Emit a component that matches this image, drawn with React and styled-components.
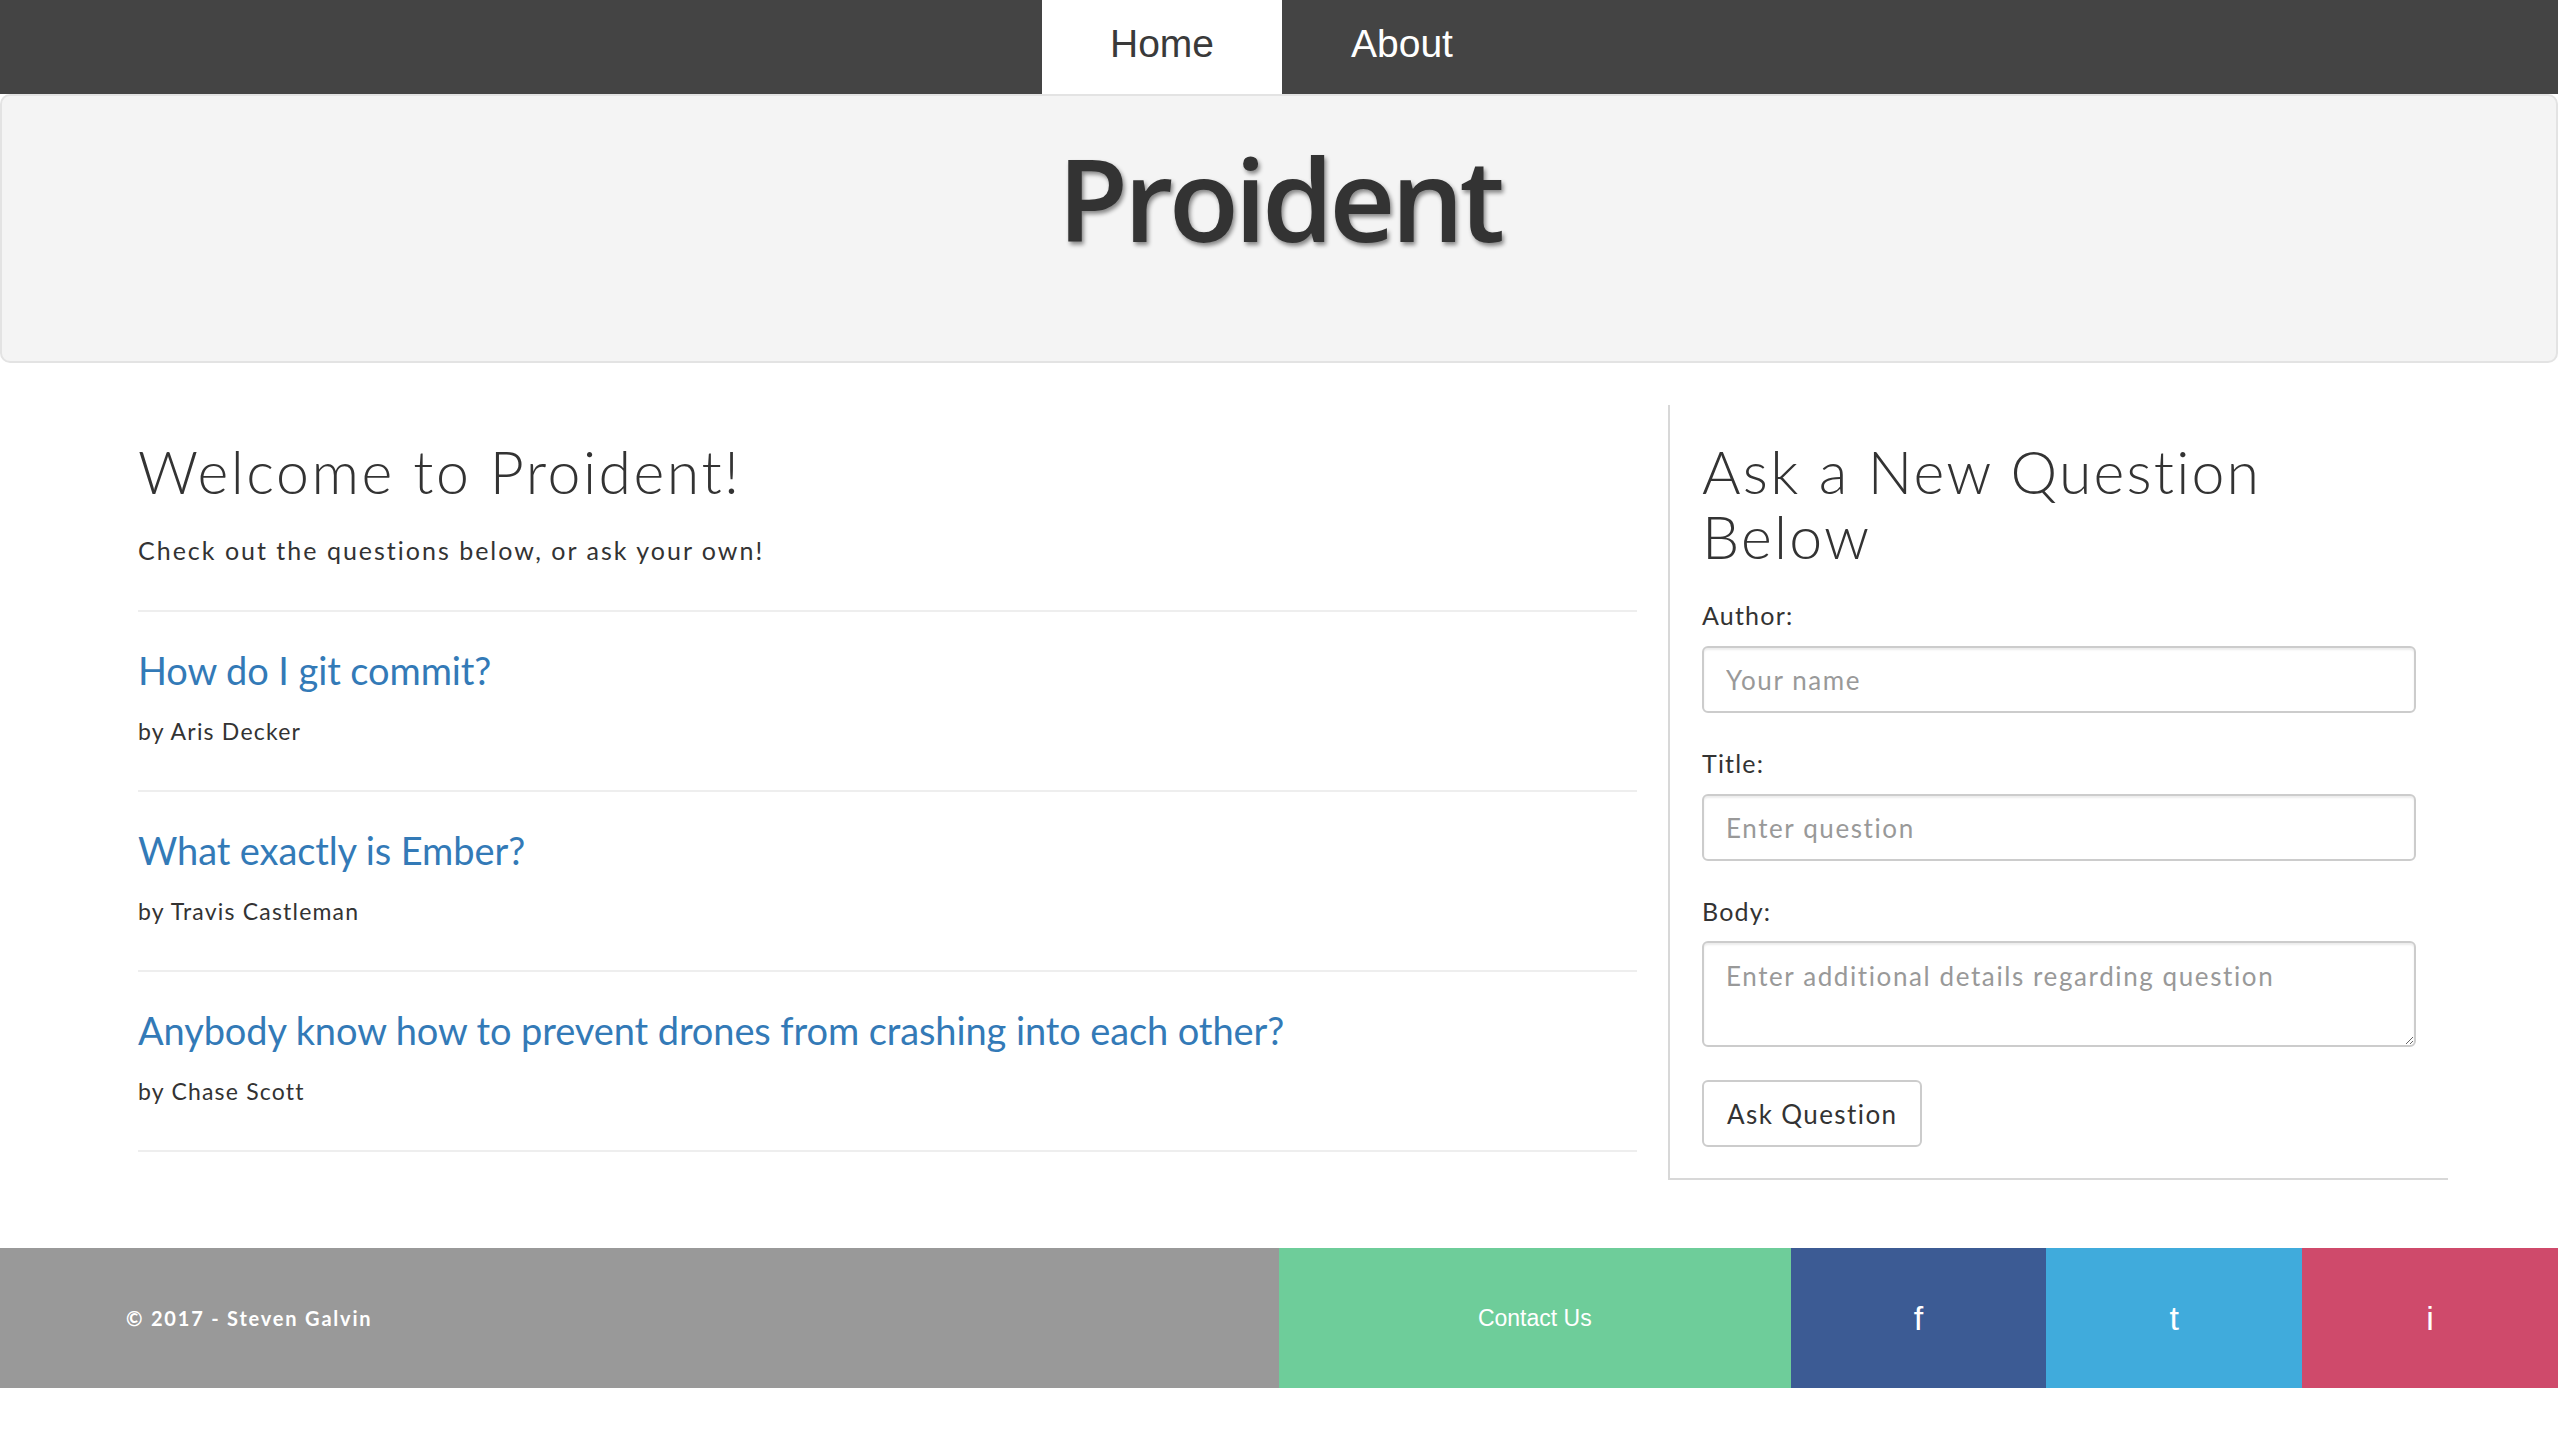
import React from 'react';
import styled, { createGlobalStyle } from 'styled-components';

const GlobalStyle = createGlobalStyle`
  html, body {
    margin: 0;
    padding: 0;
    background: #fff;
  }
  body {
    font-family: Lato, "Open Sans", sans-serif;
    color: #333;
  }
  * {
    box-sizing: border-box;
  }
`;

const NavBar = styled.nav`
  height: 94px;
  padding-left: 6px;
  background-color: #444;
  display: flex;
  justify-content: center;
`;

const NavTab = styled.a`
  width: 240px;
  height: 94px;
  display: flex;
  align-items: center;
  justify-content: center;
  padding-bottom: 6px;
  font-family: "Liberation Sans", Arial, sans-serif;
  font-size: 39px;
  text-decoration: none;
  background-color: ${(props) => (props.active ? '#fff' : 'transparent')};
  color: ${(props) => (props.active ? '#3a3a3a' : '#fff')};
`;

const Jumbotron = styled.header`
  height: 269px;
  padding-top: 44px;
  background-color: #f4f4f4;
  border: 2px solid #e3e3e3;
  border-radius: 10px;
  text-align: center;
`;

const BrandTitle = styled.h1`
  margin: 0;
  font-family: "Open Sans", sans-serif;
  font-weight: 600;
  font-size: 115px;
  line-height: 1;
  letter-spacing: -4.5px;
  color: #333;
  text-shadow: 2px 3px 4px rgba(0, 0, 0, 0.45);
`;

const Main = styled.main`
  display: flex;
  align-items: flex-start;
  gap: 31px;
  padding: 42px 110px 0 138px;
`;

const LeftColumn = styled.section`
  flex: 1;
  min-width: 0;
`;

const Heading = styled.h2`
  margin: ${(props) => props.$margin || '0'};
  font-family: Lato, sans-serif;
  font-weight: 300;
  font-size: 59px;
  line-height: 65px;
  letter-spacing: ${(props) => props.$spacing || '2.5px'};
  color: #333;
`;

const Intro = styled.p`
  margin: 29px 0 43px;
  font-size: 25px;
  line-height: 34px;
  letter-spacing: 2px;
`;

const QuestionItem = styled.article`
  border-top: 2px solid #eee;
  padding: 35px 0 43px;
  &:last-child {
    border-bottom: 2px solid #eee;
  }
`;

const QuestionLink = styled.a`
  display: block;
  font-size: 38px;
  line-height: 46px;
  color: #337ab7;
  text-decoration: none;
  letter-spacing: -0.1px;
`;

const Byline = styled.p`
  margin: 22px 0 0;
  font-size: 23px;
  line-height: 32px;
  letter-spacing: 1.2px;
  color: #333;
`;

const FormPanel = styled.aside`
  width: 780px;
  padding: 34px 32px 31px;
  border-left: 2px solid #d8d8d8;
  border-bottom: 2px solid #d8d8d8;
`;

const FormGroup = styled.div`
  margin-bottom: ${(props) => props.$gap || '34px'};
`;

const Label = styled.label`
  display: block;
  margin-bottom: ${(props) => props.$gap || '15px'};
  font-size: 25px;
  line-height: 32px;
  letter-spacing: 1.2px;
  color: #333;
`;

const fieldStyles = `
  display: block;
  width: 100%;
  padding: 0 22px;
  font-family: Lato, sans-serif;
  font-size: 26px;
  letter-spacing: 1.6px;
  color: #555;
  background: #fff;
  border: 2px solid #ccc;
  border-radius: 6px;
  box-shadow: inset 0 2px 2px rgba(0, 0, 0, 0.075);
  outline: none;
  &::placeholder {
    color: #999;
  }
`;

const TextInput = styled.input`
  ${fieldStyles}
  height: 67px;
`;

const TextArea = styled.textarea`
  ${fieldStyles}
  height: 106px;
  padding-top: 16px;
  line-height: 34px;
  resize: vertical;
`;

const SubmitButton = styled.button`
  height: 67px;
  padding: 0 23px;
  font-family: Lato, sans-serif;
  font-size: 26px;
  letter-spacing: 1.4px;
  color: #333;
  background: #fff;
  border: 2px solid #ccc;
  border-radius: 6px;
  cursor: pointer;
`;

const Footer = styled.footer`
  margin-top: 68px;
  height: 140px;
  display: grid;
  grid-template-columns: 50% 20% 10% 10% 10%;
`;

const Copyright = styled.div`
  display: flex;
  align-items: center;
  padding-left: 126px;
  background-color: #999;
  color: #fff;
  font-weight: 700;
  font-size: 20px;
  letter-spacing: 1.8px;
`;

const FooterLink = styled.a`
  display: flex;
  align-items: center;
  justify-content: center;
  background-color: ${(props) => props.$bg};
  color: #fff;
  font-family: "Liberation Sans", Arial, sans-serif;
  font-size: ${(props) => props.$size || '23px'};
  text-decoration: none;
`;

const questions = [
  { title: 'How do I git commit?', author: 'Aris Decker' },
  { title: 'What exactly is Ember?', author: 'Travis Castleman' },
  {
    title: 'Anybody know how to prevent drones from crashing into each other?',
    author: 'Chase Scott',
  },
];

const socials = [
  { label: 'f', bg: '#3c5b94' },
  { label: 't', bg: '#40abdc' },
  { label: 'i', bg: '#cf4a6b' },
];

export default function App() {
  return (
    <>
      <GlobalStyle />
      <NavBar>
        <NavTab href="#" active>
          Home
        </NavTab>
        <NavTab href="#">About</NavTab>
      </NavBar>
      <Jumbotron>
        <BrandTitle>Proident</BrandTitle>
      </Jumbotron>
      <Main>
        <LeftColumn>
          <Heading $margin="34px 0 0">Welcome to Proident!</Heading>
          <Intro>Check out the questions below, or ask your own!</Intro>
          {questions.map((q) => (
            <QuestionItem key={q.title}>
              <QuestionLink href="#">{q.title}</QuestionLink>
              <Byline>by {q.author}</Byline>
            </QuestionItem>
          ))}
        </LeftColumn>
        <FormPanel>
          <Heading $margin="0 0 30px" $spacing="2.2px">
            Ask a New Question
            <br />
            Below
          </Heading>
          <FormGroup>
            <Label htmlFor="author">Author:</Label>
            <TextInput id="author" placeholder="Your name" />
          </FormGroup>
          <FormGroup>
            <Label htmlFor="title">Title:</Label>
            <TextInput id="title" placeholder="Enter question" />
          </FormGroup>
          <FormGroup $gap="33px">
            <Label htmlFor="body" $gap="14px">
              Body:
            </Label>
            <TextArea
              id="body"
              placeholder="Enter additional details regarding question"
            />
          </FormGroup>
          <SubmitButton type="button">Ask Question</SubmitButton>
        </FormPanel>
      </Main>
      <Footer>
        <Copyright>© 2017 - Steven Galvin</Copyright>
        <FooterLink href="#" $bg="#6ecd9a">
          Contact Us
        </FooterLink>
        {socials.map((s) => (
          <FooterLink key={s.label} href="#" $bg={s.bg} $size="34px">
            {s.label}
          </FooterLink>
        ))}
      </Footer>
    </>
  );
}
